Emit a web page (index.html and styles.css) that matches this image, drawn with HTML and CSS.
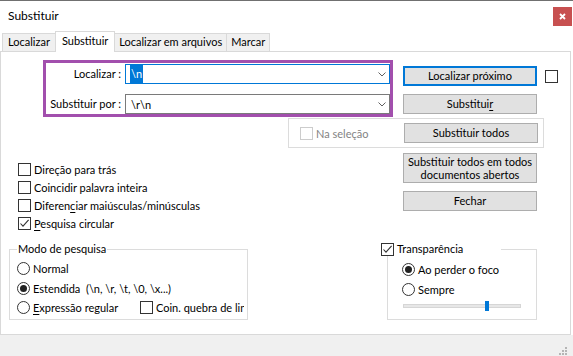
FILE: index.html
```html
<!DOCTYPE html>
<html lang="pt">
<head>
<meta charset="utf-8">
<title>Substituir</title>
<link rel="stylesheet" href="styles.css">
</head>
<body>
<div class="window">
  <div class="titlebar">
    <span class="title">Substituir</span>
    <span class="close"><svg width="7" height="7" viewBox="0 0 7 7"><path d="M1 1L6 6M6 1L1 6" stroke="#fff" stroke-width="1.8" fill="none"/></svg></span>
  </div>
  <div class="tabs">
    <div class="tab">Localizar</div>
    <div class="tab active">Substituir</div>
    <div class="tab">Localizar em arquivos</div>
    <div class="tab">Marcar</div>
  </div>
  <div class="panel">
    <div class="top-row">
      <div class="fields">
        <div class="field">
          <label class="field-label">Localizar :</label>
          <div class="combo focus"><span class="sel">\n</span><svg class="chev" width="8" height="5" viewBox="0 0 8 5"><path d="M0.5 0.5L4 4L7.5 0.5" stroke="#606060" fill="none"/></svg></div>
        </div>
        <div class="field">
          <label class="field-label">Substituir por :</label>
          <div class="combo"><span class="val">\r\n</span><svg class="chev" width="8" height="5" viewBox="0 0 8 5"><path d="M0.5 0.5L4 4L7.5 0.5" stroke="#606060" fill="none"/></svg></div>
        </div>
      </div>
      <div class="btn-col">
        <div class="btn-line">
          <button class="btn primary">Localizar próximo</button>
          <span class="cb"></span>
        </div>
        <button class="btn">Substitui<u>r</u></button>
      </div>
    </div>

    <div class="sel-group">
      <label class="check disabled"><span class="cb"></span><span>Na seleção</span></label>
      <button class="btn">Substituir todos</button>
    </div>

    <div class="mid-row">
      <div class="options">
        <label class="check"><span class="cb"></span><span>Direção para trás</span></label>
        <label class="check"><span class="cb"></span><span>Coincidir palavra inteira</span></label>
        <label class="check"><span class="cb"></span><span>Diferen<u>c</u>iar maiúsculas/minúsculas</span></label>
        <label class="check"><span class="cb"><svg width="11" height="11" viewBox="0 0 11 11"><path d="M1.5 5.5L4 8.2L9.6 1.8" stroke="#333" stroke-width="1.1" fill="none"/></svg></span><span><u>P</u>esquisa circular</span></label>
      </div>
      <div class="btn-col2">
        <button class="btn tall">Substituir todos em todos<br>documentos abertos</button>
        <button class="btn">Fechar</button>
      </div>
    </div>

    <div class="bottom-row">
      <fieldset class="group mode">
        <legend>Modo de pesquisa</legend>
        <label class="radio"><span class="rb"></span><span>Normal</span></label>
        <label class="radio"><span class="rb on"></span><span>Estendida&nbsp; (\n, \r, \t, \0, \x...)</span></label>
        <div class="radio-line">
          <label class="radio regex"><span class="rb"></span><span><u>E</u>xpressão regular</span></label>
          <label class="check clip"><span class="cb"></span><span>Coin. quebra de linha</span></label>
        </div>
      </fieldset>
      <fieldset class="group transp">
        <legend><span class="cb"><svg width="11" height="11" viewBox="0 0 11 11"><path d="M1.5 5.5L4 8.2L9.6 1.8" stroke="#333" stroke-width="1.1" fill="none"/></svg></span><span>Transparência</span></legend>
        <label class="radio"><span class="rb on"></span><span>Ao perder o foco</span></label>
        <label class="radio"><span class="rb"></span><span>Sempre</span></label>
        <div class="slider"><div class="track"></div><div class="thumb" style="left: 82px"></div></div>
      </fieldset>
    </div>
  </div>
  <div class="footer">
    <svg class="grip" width="8" height="8" viewBox="0 0 8 8" fill="#b5b5b5">
      <rect x="6" y="0" width="2" height="2"/>
      <rect x="3" y="3" width="2" height="2"/><rect x="6" y="3" width="2" height="2"/>
      <rect x="0" y="6" width="2" height="2"/><rect x="3" y="6" width="2" height="2"/><rect x="6" y="6" width="2" height="2"/>
    </svg>
  </div>
</div>
</body>
</html>
```

FILE: styles.css
```css
* { box-sizing: border-box; }
html, body { margin: 0; padding: 0; }
body {
  width: 573px;
  height: 356px;
  overflow: hidden;
  background: #fff;
  font-family: "Lato", "Open Sans", sans-serif;
  font-size: 11px;
  color: #000;
}
u { text-decoration: underline; text-underline-offset: 2px; }

.window {
  height: 356px;
  border-top: 1px solid #707070;
  display: flex;
  flex-direction: column;
}

.titlebar {
  height: 30px;
  display: flex;
  align-items: flex-start;
  padding-left: 8px;
}
.title {
  font-size: 12px;
  line-height: 16px;
  margin-top: 7px;
}
.close {
  margin-left: auto;
  margin-right: 1px;
  margin-top: 6px;
  width: 19px;
  height: 19px;
  background: #c75050;
  display: flex;
  align-items: center;
  justify-content: center;
}

.tabs {
  height: 20px;
  display: flex;
  align-items: flex-end;
  padding-left: 2px;
  position: relative;
  z-index: 1;
}
.tab {
  height: 18px;
  line-height: 16px;
  padding: 0 4px;
  background: #f0f0f0;
  border: 1px solid #d9d9d9;
  border-bottom: none;
  margin-left: -1px;
}
.tab:first-child { margin-left: 0; padding: 0 5px; }
.tab.active {
  background: #fff;
  height: 21px;
  margin-bottom: -1px;
  line-height: 18px;
  padding: 0 6px;
}

.panel {
  width: 571px;
  height: 284px;
  border: 1px solid #d9d9d9;
  display: flex;
  flex-direction: column;
}

.top-row {
  display: flex;
  margin-top: 8px;
  padding-left: 42px;
}
.fields {
  width: 350px;
  height: 57px;
  border: 3px solid #a24fad;
  padding-top: 1px;
  display: flex;
  flex-direction: column;
  gap: 10px;
}
.field {
  display: flex;
  height: 20px;
}
.field-label {
  width: 79px;
  text-align: right;
  padding-right: 4px;
  line-height: 20px;
  white-space: nowrap;
}
.combo {
  flex: 1;
  height: 20px;
  border: 1px solid #7a7a7a;
  display: flex;
  align-items: center;
  padding-left: 4px;
}
.combo.focus { border-color: #0078d7; }
.sel {
  background: #0078d7;
  color: #fff;
  line-height: 18px;
  padding: 0 1px;
}
.val { padding-left: 1px; }
.chev { margin-left: auto; margin-right: 3px; }

.btn {
  width: 134px;
  height: 20px;
  border: 1px solid #adadad;
  background: #e1e1e1;
  font-family: inherit;
  font-size: 11px;
  color: #000;
  padding: 0;
  line-height: 14px;
}
.btn.primary { border: 2px solid #0078d7; }
.btn.tall { height: 30px; line-height: 13px; }

.btn-col {
  margin-left: 10px;
  padding-top: 6px;
  display: flex;
  flex-direction: column;
  gap: 8px;
}
.btn-line {
  display: flex;
  align-items: center;
  gap: 8px;
}

.cb {
  width: 13px;
  height: 13px;
  border: 1px solid #333;
  background: #fff;
  display: inline-flex;
  align-items: center;
  justify-content: center;
  flex: none;
}

.sel-group {
  margin-left: 287px;
  margin-top: 1px;
  width: 256px;
  height: 30px;
  border: 1px solid #dcdcdc;
  display: flex;
  align-items: center;
  padding-left: 11px;
}
.sel-group .btn { margin-left: auto; margin-right: 5px; }

.check {
  display: flex;
  align-items: center;
  gap: 3px;
  height: 18px;
  white-space: nowrap;
}
.check.disabled { color: #838383; }
.check.disabled .cb { border-color: #cccccc; }

.mid-row {
  display: flex;
  margin-top: 5px;
}
.options {
  flex: 0 0 402px;
  padding-left: 17px;
  padding-top: 7px;
}
.btn-col2 {
  display: flex;
  flex-direction: column;
  gap: 8px;
}

.bottom-row {
  display: flex;
  margin-top: 10px;
  padding-left: 8px;
}
.group {
  margin: 0;
  border: 1px solid #dcdcdc;
  padding: 3px 3px 1px 7px;
  min-width: 0;
}
.group legend {
  padding: 0 1px;
  line-height: 14px;
}
.mode { width: 239px; }
.transp {
  width: 150px;
  margin-left: 139px;
  padding: 4px 0 5px 14px;
}
.transp legend {
  margin-left: -21px;
  width: 120px;
  padding: 0;
  display: flex;
  align-items: center;
  gap: 3px;
  background: #fff;
}

.radio {
  display: flex;
  align-items: center;
  gap: 3px;
  height: 19.5px;
  white-space: nowrap;
}
.rb {
  width: 13px;
  height: 13px;
  border: 1px solid #333;
  border-radius: 50%;
  background: #fff;
  display: inline-flex;
  align-items: center;
  justify-content: center;
  flex: none;
}
.rb.on::after {
  content: "";
  width: 7px;
  height: 7px;
  border-radius: 50%;
  background: #222;
}
.radio-line {
  display: flex;
  align-items: center;
  height: 19.5px;
}
.radio.regex { width: 123px; flex: none; }
.check.clip {
  flex: 1;
  min-width: 0;
  overflow: hidden;
}

.slider {
  position: relative;
  height: 14px;
  margin-left: 1px;
  width: 118px;
  display: flex;
  align-items: center;
}
.track {
  width: 118px;
  height: 4px;
  background: #e7e7e7;
  border: 1px solid #d6d6d6;
}
.thumb {
  position: absolute;
  top: 2px;
  width: 4px;
  height: 10px;
  background: #0078d7;
}

.footer {
  flex: 1;
  background: #f0f0f0;
  display: flex;
  align-items: flex-end;
  justify-content: flex-end;
  padding: 0 6px 1px 0;
}
```
